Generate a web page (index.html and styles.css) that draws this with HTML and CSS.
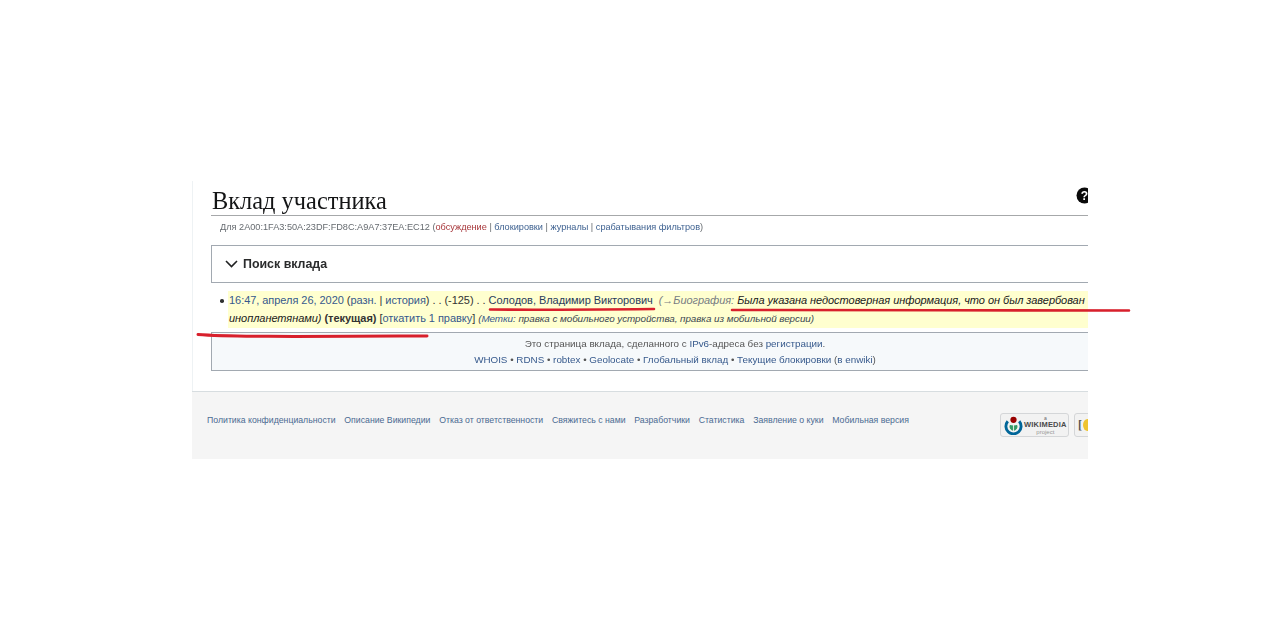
FILE: index.html
```html
<!DOCTYPE html>
<html lang="ru">
<head>
<meta charset="utf-8">
<title>Вклад участника</title>
<link rel="stylesheet" href="styles.css">
</head>
<body>
<div class="stage">
  <div class="frame">
    <main class="content">
      <div class="head">
        <h1 class="title">Вклад участника</h1>
        <svg class="help" width="17" height="17" viewBox="0 0 17 17"><circle cx="8.500" cy="8.500" r="8" fill="#0a0a0a"/><text x="8.500" y="13" class="help-q">?</text></svg>
      </div>
      <div class="sub">Для <a>2A00:1FA3:50A:23DF:FD8C:A9A7:37EA:EC12</a> (<a class="red">обсуждение</a> | <a>блокировки</a> | <a>журналы</a> | <a>срабатывания фильтров</a>)</div>
      <div class="search">
        <svg class="chev" width="13" height="8" viewBox="0 0 13 8"><path d="M1 1l5.500 5.500L12 1" fill="none" stroke="#202122" stroke-width="1.600"/></svg>
        <span>Поиск вклада</span>
      </div>
      <ul class="list">
        <li class="item"><span class="mark"><a>16:47, апреля 26, 2020</a> (<a>разн.</a> | <a>история</a>) . . (-125) . . <a class="page">Солодов, Владимир Викторович</a> &nbsp;<i class="sum"><span class="sec">(→Биография:</span> Была указана недостоверная информация, что он был завербован<br>инопланетянами)</i> <b>(текущая)</b> [<a>откатить 1 правку</a>] <i class="tags">(<a>Метки</a>: правка с мобильного устройства, правка из мобильной версии)</i></span></li>
      </ul>
      <div class="note">
        <div>Это страница вклада, сделанного с <a>IPv6</a>-адреса без <a>регистрации</a>.</div>
        <div><a>WHOIS</a> • <a>RDNS</a> • <a>robtex</a> • <a>Geolocate</a> • <a>Глобальный вклад</a> • <a>Текущие блокировки</a> (<a>в enwiki</a>)</div>
      </div>
    </main>
    <footer class="foot">
      <nav class="foot-links"><a>Политика конфиденциальности</a><a>Описание Википедии</a><a>Отказ от ответственности</a><a>Свяжитесь с нами</a><a>Разработчики</a><a>Статистика</a><a>Заявление о куки</a><a>Мобильная версия</a></nav>
      <div class="badges">
        <div class="badge wm">
          <svg width="19" height="19" viewBox="0 0 20 20"><path d="M4 5.500A8 8 0 1 0 16 5.500" fill="none" stroke="#069" stroke-width="3"/><path d="M6.700 9.500A4 4 0 0 0 9 15V10M13.300 9.500A4 4 0 0 1 11 15V10" fill="#396" stroke="#396" stroke-width="1"/><circle cx="10" cy="4" r="3.300" fill="#900"/></svg>
          <div class="wm-text"><span class="wm-a">a</span><span class="wm-name">WIKIMEDIA</span><span class="wm-p">project</span></div>
        </div>
        <div class="badge mw"><span class="mw-b">[</span><span class="mw-sun"></span></div>
      </div>
    </footer>
  </div>
  <svg class="marks" width="1280" height="642" viewBox="0 0 1280 642">
    <path d="M490 309.500C540 310 600 309.500 654 309" class="ink"/>
    <path d="M732 310C860 310 1000 310.500 1129 310.500" class="ink"/>
    <path d="M198 334.500C230 337 300 336.500 427 336" class="ink thick"/>
  </svg>
</div>
</body>
</html>
```
FILE: styles.css
```css
html, body { margin: 0; padding: 0; background: #fff; }
body { height: 642px; overflow: hidden; font-family: "Liberation Sans", Arial, sans-serif; color: #202122; }
.stage { position: relative; height: 642px; padding: 181px 192px 0; box-sizing: border-box; filter: blur(0.3px); }
.frame { width: 896px; height: 278px; overflow: hidden; display: flex; flex-direction: column; }
a { color: #36598c; }
.content { flex: 0 0 210px; box-sizing: border-box; width: 960px; padding: 0 0 0 18px; border-left: 1px solid #eef2f4; }
.head { height: 34px; width: 924px; box-sizing: content-box; display: flex; align-items: flex-end; border-bottom: 1px solid #a6a8aa; }
.title { margin: 0 0 0 1px; font: 400 24.4px/34px "Liberation Serif", serif; color: #141516; position: relative; top: 3px; }
.help { align-self: flex-start; margin: 6px 0 0 689px; }
.help-q { font: 700 12px "Liberation Sans", sans-serif; fill: #fff; text-anchor: middle; }
.sub { margin: 5px 0 0 9px; font-size: 9.17px; line-height: 12px; color: #666b70; white-space: nowrap; }
.sub a { color: #3f6291; }
.sub a:first-child { color: #666b70; }
.sub .red { color: #a8383c; }
.search { width: 924px; height: 38px; box-sizing: border-box; margin-top: 12px; border: 1px solid #a2a9b1; display: flex; align-items: center; gap: 5px; padding-left: 13px; font-size: 12.4px; font-weight: 700; color: #2a2b2c; }
.list { margin: 0; padding: 0 0 0 16px; list-style: none; }
.item { width: 900px; font-size: 11px; letter-spacing: -0.048px; line-height: 18px; margin-top: 8px; position: relative; color: #333; white-space: nowrap; }
.item::before { content: ""; position: absolute; left: -7px; top: 8px; width: 3.5px; height: 3.5px; border-radius: 50%; background: #303132; }
.mark { display: block; background: #ffffcf; margin-left: 1px; padding-left: 1px; }
.page { color: #2a3d5c; }
.sum { color: #1a1a1a; }
.sec { color: #777c82; }
.tags { font-size: 9.85px; color: #3a4650; }
.note { width: 928px; height: 39px; box-sizing: border-box; margin-top: 4px; border: 1px solid #a2a9b1; background: #f6f9fb; display: flex; flex-direction: column; align-items: center; justify-content: center; font-size: 9.83px; line-height: 16px; color: #555; }
.foot { flex: 1; border-top: 1px solid #d7dde0; background: #f5f5f5; display: flex; padding: 0 0 0 15px; width: 960px; box-sizing: border-box; position: relative; }
.foot-links { display: flex; gap: 8.7px; margin-top: 22px; font-size: 8.72px; line-height: 12px; height: 12px; white-space: nowrap; }
.foot-links a { color: #4a6a92; }
.badges { position: absolute; left: 808px; top: 21px; display: flex; gap: 5px; }
.badge { height: 24px; box-sizing: border-box; border: 1px solid #d4d6d8; border-radius: 3px; background: #f2f2f2; display: flex; align-items: center; }
.wm { width: 69px; padding-left: 3px; gap: 1px; }
.wm-text { display: flex; flex-direction: column; align-items: center; line-height: 6px; }
.wm-a { font-size: 5px; color: #666; }
.wm-name { font-size: 7.5px; font-weight: 700; color: #4a4a4a; letter-spacing: .2px; line-height: 8px; }
.wm-p { font-size: 6px; color: #999; }
.mw { width: 40px; padding-left: 3px; }
.mw-b { font: 700 12px "Liberation Serif", serif; color: #555; }
.mw-sun { width: 9px; height: 12px; background: #eec430; border-radius: 50%; margin-left: 1px; }
.marks { position: absolute; left: 0; top: 0; pointer-events: none; }
.ink { fill: none; stroke: #d8202c; stroke-width: 2.6; stroke-linecap: round; }
.thick { stroke-width: 3; }
```
